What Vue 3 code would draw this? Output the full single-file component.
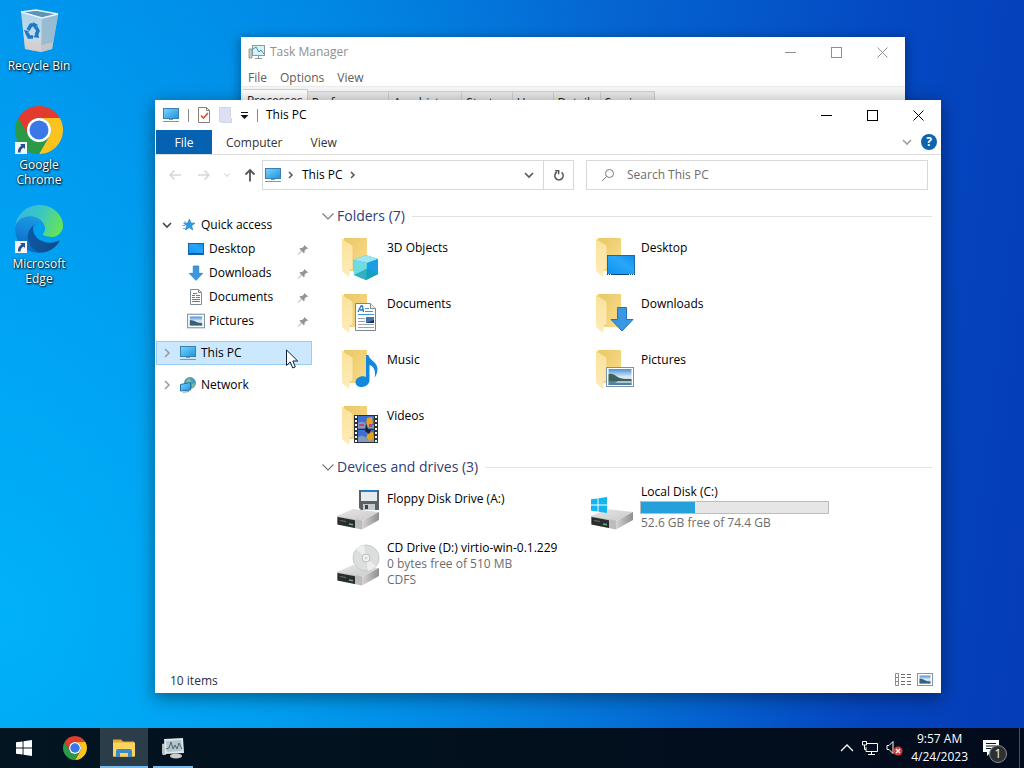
<template>
  <div class="screen">
    <!-- Shared icon shapes -->
    <svg class="icon-sheet" aria-hidden="true">
      <defs>
        <linearGradient id="g-screen" x1="0" y1="0" x2="1" y2="1">
          <stop offset="0" stop-color="#7fd4fb" />
          <stop offset="1" stop-color="#1a95e0" />
        </linearGradient>
        <linearGradient id="g-desk" x1="0" y1="1" x2="1" y2="0">
          <stop offset="0" stop-color="#0d93f0" />
          <stop offset="0.6" stop-color="#2aa6f8" />
          <stop offset="1" stop-color="#0a8eec" />
        </linearGradient>
        <linearGradient id="g-back" x1="0" y1="0" x2="1" y2="1">
          <stop offset="0" stop-color="#e9c767" />
          <stop offset="1" stop-color="#fbdc8a" />
        </linearGradient>
        <linearGradient id="g-leaf" x1="0" y1="0" x2="0" y2="1">
          <stop offset="0" stop-color="#fbe29c" />
          <stop offset="1" stop-color="#fdebb8" />
        </linearGradient>
        <linearGradient id="g-drive" x1="0" y1="0" x2="1" y2="1">
          <stop offset="0" stop-color="#e6e6e6" />
          <stop offset="1" stop-color="#c9c9c9" />
        </linearGradient>
        <linearGradient id="g-side" x1="0" y1="0" x2="1" y2="0">
          <stop offset="0" stop-color="#d4d4d4" />
          <stop offset="1" stop-color="#8f8f8f" />
        </linearGradient>
        <linearGradient id="g-sky" x1="0" y1="0" x2="0" y2="1">
          <stop offset="0" stop-color="#4b8fd8" />
          <stop offset="0.5" stop-color="#dcebf6" />
          <stop offset="1" stop-color="#88a9c4" />
        </linearGradient>
        <linearGradient id="g-edge-a" x1="0" y1="0" x2="1" y2="0">
          <stop offset="0" stop-color="#0c59a4" />
          <stop offset="1" stop-color="#114a8b" />
        </linearGradient>
        <linearGradient id="g-edge-b" x1="0.6" y1="0" x2="0.3" y2="1">
          <stop offset="0" stop-color="#1b9de2" />
          <stop offset="0.5" stop-color="#1383d9" />
          <stop offset="1" stop-color="#0a62b9" />
        </linearGradient>
        <linearGradient id="g-edge-c" x1="0" y1="0.3" x2="1" y2="0.6">
          <stop offset="0" stop-color="#35b5e6" />
          <stop offset="0.5" stop-color="#3cc8c0" />
          <stop offset="1" stop-color="#66e452" />
        </linearGradient>
        <linearGradient id="g-bin" x1="0" y1="0" x2="0" y2="1">
          <stop offset="0" stop-color="#a9d2ea" />
          <stop offset="0.6" stop-color="#c9dde9" />
          <stop offset="1" stop-color="#cfc9c7" />
        </linearGradient>
      </defs>

      <symbol id="i-pc" viewBox="0 0 18 16">
        <rect x="1.5" y="1.5" width="15" height="10" fill="url(#g-screen)" stroke="#3a81b0" />
        <path d="M7 12.500h4M1 14.500h16" stroke="#7d98a8" />
      </symbol>

      <symbol id="i-chrome" viewBox="0 0 48 48">
        <path d="M24 12H44.780A24 24 0 0 0 3.220 12L13.610 30A12 12 0 0 1 24 12z" fill="#e33b2e" />
        <path d="M34.390 30L24 48A24 24 0 0 0 44.780 12H24A12 12 0 0 1 34.390 30z" fill="#fcc31f" />
        <path d="M13.610 30L3.220 12A24 24 0 0 0 24 48L34.390 30A12 12 0 0 1 13.610 30z" fill="#2b9a47" />
        <circle cx="24" cy="24" r="12" fill="#fff" />
        <circle cx="24" cy="24" r="9.500" fill="#3b78e7" />
      </symbol>

      <symbol id="i-edge" viewBox="0 0 256 256">
        <path fill="url(#g-edge-a)" d="M231.070 190.540c-3.380 1.760-6.860 3.330-10.430 4.690a101.870 101.870 0 0 1-35.940 6.460c-47.360 0-88.600-32.580-88.600-74.380a31.520 31.520 0 0 1 16.430-27.310c-42.840 1.800-53.830 46.400-53.830 72.530 0 73.880 68.120 81.370 82.790 81.370 7.910 0 19.850-2.300 27.030-4.570l1.310-.44a128.340 128.340 0 0 0 66.600-52.800 4 4 0 0 0-5.360-5.550z" />
        <path fill="url(#g-edge-b)" d="M105.730 241.420a79.200 79.200 0 0 1-22.740-21.340 80.720 80.720 0 0 1 29.540-120.080c3.130-1.470 8.480-4.140 15.600-4a32.500 32.500 0 0 1 25.770 13c4.100 5.500 6.370 12.100 6.480 18.950 0-.2 24.500-79.640-80.020-79.640-43.900 0-80.010 41.660-80.010 78.220a130.150 130.150 0 0 0 12.110 56 128 128 0 0 0 156.380 67.120 75.550 75.550 0 0 1-62.780-8z" />
        <path fill="url(#g-edge-c)" d="M152.330 148.860c-.81 1.050-3.300 2.500-3.300 5.670 0 2.610 1.700 5.120 4.720 7.230 14.380 10 41.490 8.680 41.560 8.680a59.570 59.570 0 0 0 30.270-8.350 61.380 61.380 0 0 0 30.430-52.880c.26-22.410-8-37.310-11.340-43.910C223.460 23.840 177.720 0 128 0A128 128 0 0 0 0 126.200c.48-36.540 36.800-66.050 80-66.050 3.500 0 23.460.34 42 10.070 16.340 8.580 24.900 18.940 30.850 29.210 6.180 10.670 7.280 24.150 7.280 29.520 0 5.370-2.740 13.330-7.800 19.910z" />
      </symbol>

      <symbol id="i-bin" viewBox="0 0 48 48">
        <path d="M6 5L43 8 37 42 26 45 10 42z" fill="url(#g-bin)" />
        <path d="M27 11L43 8 37 42 26 45z" fill="#8fb4cc" opacity="0.8" />
        <path d="M6 5L21 3 43 7 27 11z" fill="#5f93b3" stroke="#e6f3fa" stroke-width="1.500" />
        <path d="M9.500 35L26 38 38 35 37 42 26 45 10 42z" fill="#d8cfcb" opacity="0.600" />
        <g transform="translate(0 -1)">
          <g fill="none" stroke="#1b79c8" stroke-width="3.500">
            <path d="M13 24l3-5 4 0" />
            <path d="M21 21l2 4-2 4" />
            <path d="M18 31h-4l-2-4" />
          </g>
          <path d="M18 16l5 3-4 4zM23 26l1 6-6-1zM9 24l5 1-3 4z" fill="#1b79c8" />
        </g>
      </symbol>

      <symbol id="i-shortcut" viewBox="0 0 12 12">
        <rect width="12" height="12" fill="#f4f4f4" />
        <path d="M5 2h5v5L8.500 5.500Q5.500 7 5.500 10.500H3Q2.500 6 6.500 3.500z" fill="#234f94" />
      </symbol>

      <symbol id="i-star" viewBox="0 0 18 16">
        <path d="M10.500 2l1.300 4 4.200.2-3.400 2.500 1.200 4.300-3.600-2.400L6.500 13l1.200-4.200L4.600 6.200l4.100-.2z" fill="#2c9ae3" stroke="#2a86c4" stroke-width="0.700" />
        <path d="M4 11.500h3M3 8.500h3M5 5h2" stroke="#6fb4de" />
      </symbol>

      <symbol id="i-desktop" viewBox="0 0 18 16">
        <rect x="1.500" y="2.500" width="15" height="11" fill="url(#g-desk)" stroke="#1466a8" />
        <path d="M2 12.500h14" stroke="#0b5693" />
      </symbol>

      <symbol id="i-down" viewBox="0 0 24 26">
        <path d="M7.500 1.500h9v12h6.500L12 25 1 13.500h6.500z" fill="#3a97e2" stroke="#2273b8" />
      </symbol>

      <symbol id="i-doc" viewBox="0 0 16 16">
        <path d="M2.500.5h8l3 3v12h-11z" fill="#fff" stroke="#7e8c95" />
        <path d="M10.500.5v3h3" fill="none" stroke="#7e8c95" />
        <path d="M4 6.500h3M8 6.500h4M4 8.500h3M8 8.500h4M4 10.500h8M4 12.500h8M5 4.500h4" stroke="#2f8ccd" />
      </symbol>

      <symbol id="i-picture" viewBox="0 0 28 20">
        <rect x="0.500" y="0.500" width="27" height="19" fill="#fff" stroke="#7693aa" />
        <rect x="2.500" y="2" width="23" height="16" fill="url(#g-sky)" />
        <path d="M2.500 7q4-1 7 1.500t9 3.500h7v2h-23z" fill="#3c6259" />
        <path d="M2.500 14h23v4h-23z" fill="#54809f" />
        <path d="M12 14h13.500v2H9z" fill="#a9c5d6" />
      </symbol>

      <symbol id="i-picture-small" viewBox="0 0 16 13">
        <rect x="0.500" y="0.500" width="15" height="12" fill="#fff" stroke="#8597a5" />
        <path d="M2.500 2.500h11v8h-11z" fill="url(#g-sky)" />
        <path d="M2.500 5.500q3 0 5 1.500t6 1.500v2h-11z" fill="#35617c" />
      </symbol>

      <symbol id="i-network" viewBox="0 0 18 16">
        <circle cx="11" cy="6" r="5.500" fill="#4b9bc4" stroke="#2f7093" stroke-width="0.600" />
        <path d="M9 1.500q4 0 3 3t-3 2-2-2zM13 7l3-1-1 3-2 2z" fill="#83bf8d" />
        <path d="M1.500 7.500l10-2v7.500l-10 1z" fill="url(#g-screen)" stroke="#1e74ae" />
        <path d="M4 15.300l6-.8" stroke="#7d98a8" />
      </symbol>

      <symbol id="i-pin" viewBox="0 0 12 12">
        <path d="M7 1l4 4-1.300.5-.7-.1-1.800 1.800.1 2-1 .9L4.100 7.900.5 11.500 0 11l3.700-3.600L1.600 5.200l1-.9 2 .1L6.500 2.500z" fill="#8e979e" />
      </symbol>

      <symbol id="i-folder" viewBox="0 0 48 48">
        <path d="M8 2h22q1 0 1 1v32H12z" fill="url(#g-back)" />
        <path d="M6 3l10 6q1 1 1 3v20l-3 1-1 8-6-5q-1-1-1-3z" fill="url(#g-leaf)" />
        <path d="M6 3l10 6q1 1 1 3v20" fill="none" stroke="#eccb74" stroke-width="0.700" />
      </symbol>

      <symbol id="i-drive" viewBox="0 0 48 48">
        <path d="M1 32L17 25l26 3-17 9z" fill="url(#g-drive)" />
        <path d="M26 37l17-9v8L26 45.500z" fill="url(#g-side)" />
        <path d="M1 32L26 36.500V45.500L1 40.500z" fill="#bdbdbd" />
        <path d="M1.500 33L19 36.200V44L1.500 40.500z" fill="#2a2d2c" />
        <path d="M4 36.500l6 1" stroke="#6c706f" stroke-width="1.200" />
        <path d="M13 40l4 .7" stroke="#6fae7e" stroke-width="1.500" />
      </symbol>

      <symbol id="i-windows" viewBox="0 0 16 16">
        <path d="M0 2.300L6.600 1.400V7.600H0zM7.500 1.250L16 0V7.600H7.500zM0 8.400H6.600V14.600L0 13.700zM7.500 8.400H16V16L7.500 14.800z" fill="currentColor" />
      </symbol>

      <symbol id="i-details" viewBox="0 0 16 13">
        <path d="M.5.5h3v12h-3zM.5 4.500h3M.5 8.500h3" fill="none" stroke="#8b8b8b" />
        <path d="M6 1.500h4M12 1.500h4M6 4.500h4M12 4.500h4M6 8.500h4M12 8.500h4M6 11.500h4M12 11.500h4" stroke="#6b6b6b" />
      </symbol>

      <symbol id="i-chevron" viewBox="0 0 12 12">
        <path d="M2 4l4 4 4-4" fill="none" stroke="currentColor" stroke-width="1.600" />
      </symbol>

      <symbol id="i-chevron-wide" viewBox="0 0 12 12">
        <path d="M.5 3.500l5.500 5.500 5.500-5.500" fill="none" stroke="currentColor" stroke-width="1.100" />
      </symbol>

      <symbol id="i-chevron-right" viewBox="0 0 12 12">
        <path d="M4 2l4 4-4 4" fill="none" stroke="currentColor" stroke-width="1.500" />
      </symbol>

      <symbol id="i-crumb" viewBox="0 0 12 12">
        <path d="M5 3l3 3-3 3" fill="none" stroke="currentColor" stroke-width="1.500" />
      </symbol>

      <symbol id="i-min" viewBox="0 0 11 11"><path d="M0 5.500h11" stroke="currentColor" /></symbol>
      <symbol id="i-max" viewBox="0 0 11 11">
        <rect x="0.500" y="0.500" width="10" height="10" fill="none" stroke="currentColor" />
      </symbol>
      <symbol id="i-close" viewBox="0 0 11 11"><path d="M.5.5l10 10M10.500.5l-10 10" stroke="currentColor" /></symbol>
    </svg>

    <main class="desktop">
      <!-- Desktop shortcuts -->
      <div class="shortcuts">
        <button v-for="item in shortcuts" :key="item.label" class="shortcut">
          <span class="shortcut-art">
            <svg class="shortcut-icon"><use :href="item.icon" /></svg>
            <svg v-if="item.link" class="shortcut-arrow"><use href="#i-shortcut" /></svg>
          </span>
          <span class="shortcut-label">{{ item.label }}</span>
        </button>
      </div>

      <!-- Task Manager -->
      <section class="window task-manager" aria-label="Task Manager">
        <header class="title-bar">
          <svg class="tm-icon" viewBox="0 0 18 16">
            <path d="M1 5h3v9H1z" fill="#c6cfc9" stroke="#7d8a86" stroke-width="0.800" />
            <rect x="4.500" y="1.500" width="12" height="10" fill="#d6f1f8" stroke="#8b9a9c" />
            <path d="M5 5l3-2 3 5 2-2 3 4" fill="none" stroke="#3d94ad" />
            <path d="M10.500 12v2M7 14.500h7" stroke="#8b9a9c" />
          </svg>
          <span class="title">Task Manager</span>
          <div class="controls">
            <button v-for="c in controls" :key="c.name" class="control" :aria-label="c.name">
              <svg><use :href="c.icon" /></svg>
            </button>
          </div>
        </header>
        <nav class="tm-menu">
          <button v-for="m in taskMenus" :key="m">{{ m }}</button>
        </nav>
        <div class="tm-tabs">
          <button v-for="(t, i) in taskTabs" :key="t" class="tm-tab" :class="{ active: i === 0 }">{{ t }}</button>
        </div>
      </section>

      <!-- File Explorer -->
      <section class="window explorer" aria-label="This PC">
        <header class="title-bar">
          <svg class="pc-icon"><use href="#i-pc" /></svg>
          <i class="bar-sep"></i>
          <button class="quick" aria-label="Properties">
            <svg width="14" height="16" viewBox="0 0 14 16">
              <path d="M1.500.5h8l3 3v12h-11z" fill="#fff" stroke="#8a7f78" />
              <path d="M9.500.5v3h3" fill="none" stroke="#8a7f78" />
              <path d="M4 8.500l2.500 2.500L11 6" fill="none" stroke="#d4502f" stroke-width="1.600" />
            </svg>
          </button>
          <button class="quick" aria-label="New folder">
            <svg width="13" height="16" viewBox="0 0 13 16">
              <path d="M.5.5h11v10l1 1v4H2.500V15h-2z" fill="#dde1f3" stroke="#d0d6e8" />
            </svg>
          </button>
          <button class="quick-more" aria-label="Customize Quick Access Toolbar">
            <svg width="9" height="8" viewBox="0 0 9 8">
              <path d="M1 1.500h7" stroke="#111" />
              <path d="M.5 4h8l-4 4z" fill="#111" />
            </svg>
          </button>
          <i class="bar-sep"></i>
          <span class="title">This PC</span>
          <div class="controls">
            <button v-for="c in controls" :key="c.name" class="control" :aria-label="c.name">
              <svg><use :href="c.icon" /></svg>
            </button>
          </div>
        </header>

        <nav class="ribbon">
          <button class="ribbon-tab file">File</button>
          <button class="ribbon-tab">Computer</button>
          <button class="ribbon-tab">View</button>
          <button class="ribbon-toggle" aria-label="Expand the Ribbon">
            <svg><use href="#i-chevron" /></svg>
          </button>
          <button class="help" aria-label="Help">?</button>
        </nav>

        <div class="address-row">
          <div class="history">
            <button class="arrow" aria-label="Back">
              <svg viewBox="0 0 14 12"><path d="M13 6H2M6.500 1.500L2 6l4.500 4.500" /></svg>
            </button>
            <button class="arrow" aria-label="Forward">
              <svg viewBox="0 0 14 12"><path d="M1 6h11M7.500 1.500L12 6l-4.500 4.500" /></svg>
            </button>
            <button class="recent" aria-label="Recent locations">
              <svg><use href="#i-chevron" /></svg>
            </button>
            <button class="arrow up" aria-label="Up">
              <svg viewBox="0 0 12 14"><path d="M6 13.500V2M1.500 6.500L6 2l4.500 4.500" /></svg>
            </button>
          </div>
          <div class="address">
            <svg class="pc-icon"><use href="#i-pc" /></svg>
            <svg class="crumb-sep"><use href="#i-crumb" /></svg>
            <button class="crumb">This PC</button>
            <svg class="crumb-sep"><use href="#i-crumb" /></svg>
            <button class="address-drop" aria-label="Previous locations">
              <svg><use href="#i-chevron" /></svg>
            </button>
            <button class="refresh" aria-label="Refresh">
              <svg viewBox="0 0 12 12">
                <path d="M8.500 3.300A4.200 4.200 0 1 1 4 3" fill="none" stroke="#555" stroke-width="1.500" />
                <path d="M2.200 1.700h3.500v3.500" fill="none" stroke="#555" stroke-width="1.400" />
              </svg>
            </button>
          </div>
          <label class="search">
            <svg viewBox="0 0 14 14">
              <circle cx="8.500" cy="5.500" r="4" fill="none" stroke="#777" />
              <path d="M5.500 8.500L1 13" stroke="#777" />
            </svg>
            <input type="text" placeholder="Search This PC" aria-label="Search This PC" />
          </label>
        </div>

        <div class="body">
          <nav class="tree">
            <button
              v-for="node in tree"
              :key="node.label"
              class="node"
              :class="[node.level, { selected: node.selected }]"
            >
              <svg v-if="node.level === 'root'" class="twisty" :class="{ open: node.open }">
                <use :href="node.open ? '#i-chevron' : '#i-chevron-right'" />
              </svg>
              <svg class="node-icon"><use :href="node.icon" /></svg>
              <span class="node-label">{{ node.label }}</span>
              <svg v-if="node.level === 'child'" class="pin"><use href="#i-pin" /></svg>
            </button>
          </nav>

          <div class="content">
            <h2 class="group">
              <svg><use href="#i-chevron-wide" /></svg>Folders (7)
            </h2>
            <div class="items folders">
              <button v-for="f in folders" :key="f.name" class="item">
                <svg class="item-icon" viewBox="0 0 48 48">
                  <use href="#i-folder" width="48" height="48" />
                  <g v-if="f.kind === 'cube'">
                    <path d="M17 24l13-5 12 4v15l-12 6-12-5z" fill="#28b3cf" />
                    <path d="M17 24l13-5 12 4-11 4z" fill="#9be6f0" />
                    <path d="M31 27l11-4v15l-12 6z" fill="#1a9fe0" />
                    <path d="M17 24l14 3-1 17-12-5z" fill="#6fdbe4" />
                    <path d="M18 39l12-6v11zM30 33l12 5-12 6z" fill="#179fae" opacity="0.700" />
                  </g>
                  <g v-else-if="f.kind === 'doc'" transform="translate(-1 -4)">
                    <path d="M20.500 15.500h15l5 5v22h-20z" fill="#fff" stroke="#7b878f" />
                    <path d="M35.500 15.500v5h5" fill="#eef2f5" stroke="#7b878f" />
                    <path d="M23 24l3-6h1.500l1 6M25 22h3.500" fill="none" stroke="#2673b8" stroke-width="1.300" />
                    <path d="M30 20.500h4M30 23.500h8M23 26.500h16" stroke="#3d97d3" />
                    <path d="M23 30.500h7M23 33.500h7M23 36.500h16M23 39.500h16" stroke="#9aa4ab" />
                    <rect x="31" y="29" width="8" height="6" fill="#4872ac" />
                    <path d="M31 35l8-3v3z" fill="#1f3157" />
                  </g>
                  <path
                    v-else-if="f.kind === 'music'"
                    d="M30 7h2.500c.5 5 9 7 9 14 0 4-1.500 6-3 9 2-8-1.500-12-5-13V32c0 4-3.500 7-8 7-3.500 0-6-2-6-4.800 0-3.400 3.500-5.900 7.500-5.900q2 0 3 .6z"
                    fill="#1488dd"
                  />
                  <g v-else-if="f.kind === 'video'" transform="translate(0 -6)">
                    <path d="M18 17h24v28H18z" fill="#2d3136" />
                    <path d="M22 18h16v12.500H22zM22 32h16v12H22z" fill="#3f6fce" />
                    <path d="M22 25q5-3 8 1t8 1v3.500H22zM22 39q5-3 8 1t8 0v4H22z" fill="#7f9cc0" />
                    <path d="M31 20l5-1 1 6-4 4-3-3zM32 35l5-1 1 6-4 3-4-3z" fill="#e3a222" />
                    <path d="M23 26h5v2h-5zM33 26h3v3h-3z" fill="#c83f7c" />
                    <path d="M30 25l2 6 3 1-2 4-4-3z" fill="#17213a" />
                    <path d="M20 18v27M40 18v27" stroke="#fff" stroke-width="2" stroke-dasharray="2 2" />
                  </g>
                  <g v-else-if="f.kind === 'desktop'">
                    <rect x="17.500" y="19.500" width="27" height="19" fill="url(#g-desk)" stroke="#1769a9" />
                    <path d="M17 38.500h28" stroke="#0b4a80" />
                    <path d="M18 38.500h3M39 38.500h5" stroke="#fff" stroke-dasharray="1 1" />
                  </g>
                  <use v-else-if="f.kind === 'down'" href="#i-down" x="20" y="14" width="24" height="26" />
                  <use v-else href="#i-picture" x="16" y="18" width="28" height="22" />
                </svg>
                <span class="item-text">{{ f.name }}</span>
              </button>
            </div>

            <h2 class="group">
              <svg><use href="#i-chevron-wide" /></svg>Devices and drives (3)
            </h2>
            <div class="items drives">
              <button class="item plain">
                <svg class="item-icon" viewBox="0 0 48 48">
                  <use href="#i-drive" width="48" height="48" />
                  <path d="M23 6h20v20H25l-2-2z" fill="#5a6268" />
                  <path d="M25 6h16v11H25z" fill="#e6ebee" />
                  <path d="M25 6h16v2H25z" fill="#2780c4" />
                  <path d="M27 20h12v6H27z" fill="#c6cbce" />
                  <path d="M29 21h3v4h-3z" fill="#3c4449" />
                </svg>
                <span class="item-text">Floppy Disk Drive (A:)</span>
              </button>

              <button class="item">
                <svg class="item-icon windows-disk" viewBox="0 0 48 48">
                  <use href="#i-drive" width="48" height="48" />
                  <use href="#i-windows" x="1" y="13" width="16" height="16" />
                </svg>
                <span class="item-text">
                  <span>Local Disk (C:)</span>
                  <span class="usage" role="progressbar" :aria-valuenow="usedPercent">
                    <span class="usage-fill" :style="{ width: usedPercent + '%' }"></span>
                  </span>
                  <span class="meta">{{ disk.free }} GB free of {{ disk.total }} GB</span>
                </span>
              </button>

              <button class="item">
                <svg class="item-icon" viewBox="0 0 48 48">
                  <use href="#i-drive" width="48" height="48" />
                  <circle cx="30" cy="18" r="13" fill="#dcdedd" stroke="#c6cac9" />
                  <path d="M30 18L20 9a13 13 0 0 1 8-4zM30 18l10 8a13 13 0 0 1-8 5z" fill="#ebeeed" />
                  <circle cx="30" cy="18" r="4" fill="#f3f3f3" stroke="#b9bcbb" />
                  <circle cx="30" cy="18" r="1.500" fill="#d2d4d3" />
                </svg>
                <span class="item-text">
                  <span>CD Drive (D:) virtio-win-0.1.229</span>
                  <span class="meta">0 bytes free of 510 MB</span>
                  <span class="meta">CDFS</span>
                </span>
              </button>
            </div>
          </div>
        </div>

        <footer class="status">
          <span>10 items</span>
          <div class="views">
            <button aria-label="Details view"><svg class="view-icon"><use href="#i-details" /></svg></button>
            <button aria-label="Large icons view"><svg class="view-icon"><use href="#i-picture-small" /></svg></button>
          </div>
        </footer>
      </section>

      <svg class="cursor" viewBox="0 0 12 20">
        <path d="M.5 1v15.500L4.200 13l2.600 6 2.500-1.100L6.800 12h4.900z" fill="#fff" stroke="#111a33" />
      </svg>
    </main>

    <!-- Taskbar -->
    <footer class="taskbar">
      <button class="task start" aria-label="Start">
        <svg><use href="#i-windows" /></svg>
      </button>
      <button class="task" aria-label="Google Chrome">
        <svg class="task-icon"><use href="#i-chrome" /></svg>
      </button>
      <button class="task running focused" aria-label="File Explorer">
        <svg class="task-icon" viewBox="0 0 24 24">
          <path d="M1 3.500h8l2 2h11v15H1z" fill="#e9a92b" />
          <path d="M1 6.500h22v14H1z" fill="#fbd35e" />
          <path d="M4 21v-6q0-2 2-2h12q2 0 2 2v6h-4v-4H8v4z" fill="#3c8ac4" />
          <path d="M8 17h8v3.500H8z" fill="#fbd35e" />
        </svg>
      </button>
      <button class="task running" aria-label="Task Manager">
        <svg class="task-icon" viewBox="0 0 24 24">
          <path d="M1 8l4-1v12H2q-1 0-1-2z" fill="#b8c1c4" />
          <path d="M3 3l19-1 1 15-19 1z" fill="#dfe6e8" />
          <path d="M5 5l15-1 1 11-15 1z" fill="#b4c5cb" />
          <path d="M5 13l3-1 2-6 2 7 2-4 2 4 2-6 3 6" fill="none" stroke="#4a6773" />
          <ellipse cx="15" cy="20" rx="6" ry="2.500" fill="#c9cfd1" />
        </svg>
      </button>
      <div class="tray">
        <button class="tray-icon" aria-label="Show hidden icons">
          <svg width="14" height="8" viewBox="0 0 14 8"><path d="M1 7l6-6 6 6" fill="none" stroke="#fff" stroke-width="1.300" /></svg>
        </button>
        <button class="tray-icon" aria-label="Network">
          <svg width="16" height="14" viewBox="0 0 16 14">
            <path d="M5 2.500h10.500v8H4V6M9.500 10.500v3M6 13.500h7M.5 .5h4v3.500h-4zM2.500 4v4.500h1.500" fill="none" stroke="#fff" />
          </svg>
        </button>
        <button class="tray-icon" aria-label="Volume muted">
          <svg width="17" height="16" viewBox="0 0 17 16">
            <path d="M1 5.500h2l4-4v12l-4-4H1z" fill="none" stroke="#fff" />
            <circle cx="12" cy="11" r="4.500" fill="#dc3b3b" />
            <path d="M10 9l4 4M14 9l-4 4" stroke="#fff" stroke-width="1.200" />
          </svg>
        </button>
        <button class="clock">
          <span>9:57 AM</span>
          <span>4/24/2023</span>
        </button>
        <button class="notify" aria-label="Notifications">
          <svg width="16" height="16" viewBox="0 0 16 16">
            <path d="M0 0h16v12H8l-4 4v-4H0z" fill="#fff" />
            <path d="M3 3.500h10M3 6h10M3 8.500h7" stroke="#0a1420" />
          </svg>
          <span class="badge">1</span>
        </button>
      </div>
    </footer>
  </div>
</template>

<script setup>
import { computed, ref } from 'vue'

const shortcuts = [
  { label: 'Recycle Bin', icon: '#i-bin' },
  { label: 'Google Chrome', icon: '#i-chrome', link: true },
  { label: 'Microsoft Edge', icon: '#i-edge', link: true }
]

const controls = [
  { name: 'Minimize', icon: '#i-min' },
  { name: 'Maximize', icon: '#i-max' },
  { name: 'Close', icon: '#i-close' }
]

const taskMenus = ['File', 'Options', 'View']
const taskTabs = ['Processes', 'Performance', 'App history', 'Startup', 'Users', 'Details', 'Services']

const tree = [
  { label: 'Quick access', icon: '#i-star', level: 'root', open: true },
  { label: 'Desktop', icon: '#i-desktop', level: 'child' },
  { label: 'Downloads', icon: '#i-down', level: 'child' },
  { label: 'Documents', icon: '#i-doc', level: 'child' },
  { label: 'Pictures', icon: '#i-picture-small', level: 'child' },
  { label: 'This PC', icon: '#i-pc', level: 'root', selected: true },
  { label: 'Network', icon: '#i-network', level: 'root' }
]

const folders = [
  { name: '3D Objects', kind: 'cube' },
  { name: 'Desktop', kind: 'desktop' },
  { name: 'Documents', kind: 'doc' },
  { name: 'Downloads', kind: 'down' },
  { name: 'Music', kind: 'music' },
  { name: 'Pictures', kind: 'picture' },
  { name: 'Videos', kind: 'video' }
]

const disk = ref({ free: 52.6, total: 74.4 })
const usedPercent = computed(() => Math.round((1 - disk.value.free / disk.value.total) * 100))
</script>

<style>
body {
  overflow: hidden;
}
</style>

<style scoped>
.screen {
  display: flex;
  flex-direction: column;
  height: 100vh;
  font-family: "Open Sans", "Noto Sans", sans-serif;
  font-size: 12px;
  line-height: 16px;
  color: #000;
  background:
    radial-gradient(ellipse 85% 110% at 0% 80%, rgba(0, 190, 255, 0.75), rgba(0, 170, 255, 0) 100%),
    linear-gradient(97deg, #008eea 0%, #0080e0 28%, #0564d0 56%, #0449c2 80%, #043cb6 100%);
}

.icon-sheet {
  position: absolute;
  width: 0;
  height: 0;
}

button {
  margin: 0;
  padding: 0;
  border: 0;
  background: none;
  font: inherit;
  color: inherit;
  text-align: left;
}

svg {
  display: block;
  flex: none;
}

.desktop {
  position: relative;
  flex: 1;
  min-height: 0;
}

/* Desktop shortcuts */
.shortcuts {
  display: grid;
  grid-template-columns: 76px;
  grid-auto-rows: 99px;
  padding: 7px 1px;
}

.shortcut {
  display: flex;
  flex-direction: column;
  align-items: center;
  justify-content: flex-start;
  gap: 3px;
  color: #fff;
  line-height: 15px;
  text-align: center;
  text-shadow: 1px 1px 2px #000, 0 0 2px rgba(0, 0, 0, 0.8);
}

.shortcut-art {
  position: relative;
}

.shortcut-icon {
  width: 48px;
  height: 48px;
}

.shortcut-arrow {
  position: absolute;
  left: 0;
  bottom: 0;
  width: 12px;
  height: 12px;
}

/* Windows */
.window {
  position: absolute;
  display: flex;
  flex-direction: column;
  border: 1px solid transparent;
  background: #fff;
  background-clip: padding-box;
  overflow: hidden;
}

.title-bar {
  display: flex;
  align-items: center;
  flex: none;
  height: 30px;
}

.controls {
  display: flex;
  align-self: stretch;
  margin-left: auto;
}

.control {
  display: grid;
  place-items: center;
  width: 46px;
}

.control svg {
  width: 11px;
  height: 11px;
}

/* Task Manager */
.task-manager {
  top: 36px;
  left: 240px;
  right: 118px;
  bottom: 200px;
  color: #5c5c5c;
  box-shadow: 0 2px 10px rgba(0, 0, 0, 0.35);
}

.task-manager .title-bar {
  color: #8f8f8f;
}

.tm-icon {
  width: 18px;
  height: 16px;
  margin: 0 4px 0 7px;
}

.tm-menu {
  display: flex;
  gap: 13px;
  padding: 2px 7px 0;
  height: 17px;
  border-bottom: 1px solid #ececec;
  flex: none;
}

.tm-tabs {
  display: flex;
  align-items: flex-end;
  flex: none;
  height: 26px;
  padding: 0 2px;
  background: #f7f7f7;
  color: #222;
}

.tm-tab {
  height: 22px;
  padding: 2px 4px 0;
  border: 1px solid #d0d0d0;
  border-left: 0;
  background: #e9e9e9;
  line-height: 16px;
}

.tm-tab.active {
  height: 24px;
  padding-top: 0;
  background: #fff;
}

/* File Explorer */
.explorer {
  top: 99px;
  left: 154px;
  right: 82px;
  bottom: 34px;
  box-shadow: 0 4px 16px rgba(0, 0, 0, 0.4);
}

.pc-icon {
  width: 18px;
  height: 16px;
}

.explorer > .title-bar {
  gap: 8px;
  padding-left: 7px;
}

.bar-sep {
  width: 1px;
  height: 13px;
  background: #8a8a8a;
}

.ribbon {
  display: flex;
  align-items: center;
  flex: none;
  height: 24px;
  padding: 0 4px 0 1px;
  border-bottom: 1px solid #dcdcdc;
  color: #333;
}

.ribbon-tab {
  height: 24px;
  padding: 2px 14px 0;
}

.ribbon-tab.file {
  width: 56px;
  padding: 2px 0 0;
  background: #0562b0;
  color: #fff;
  text-align: center;
}

.ribbon-toggle {
  margin-left: auto;
  color: #a0a0a0;
}

.ribbon-toggle svg,
.recent svg,
.address-drop svg,
.crumb-sep,
.refresh svg,
.twisty,
.group svg {
  width: 12px;
  height: 12px;
}

.help {
  width: 16px;
  height: 16px;
  margin-left: 8px;
  border-radius: 50%;
  background: #0e63ad;
  color: #fff;
  font-weight: 700;
  text-align: center;
}

.address-row {
  display: flex;
  align-items: center;
  flex: none;
  gap: 12px;
  height: 40px;
  padding: 0 13px 0 13px;
}

.history {
  display: flex;
  align-items: center;
  gap: 12px;
  margin-right: -7px;
}

.arrow svg {
  width: 14px;
  height: 14px;
  fill: none;
  stroke: #d3d8dc;
  stroke-width: 1.5;
}

.arrow.up svg {
  stroke: #555;
  stroke-width: 1.8;
}

.recent {
  color: #d3d8dc;
}

.recent svg {
  width: 8px;
  height: 8px;
}

.history .arrow:nth-child(2) {
  margin-left: 3px;
}

.address {
  display: flex;
  align-items: center;
  flex: 1 1 312px;
  height: 30px;
  padding-left: 1px;
  border: 1px solid #d9d9d9;
  box-sizing: border-box;
}

.crumb-sep {
  margin: 0 6px 0 2px;
  color: #555;
}

.crumb {
  padding: 0 1px 0 0;
}

.address-drop {
  margin-left: auto;
  padding: 0 8px;
  color: #555;
}

.refresh {
  display: grid;
  place-items: center;
  align-self: stretch;
  width: 30px;
  border-left: 1px solid #d9d9d9;
}

.search {
  display: flex;
  align-items: center;
  flex: 1 1 342px;
  gap: 12px;
  height: 30px;
  padding-left: 14px;
  border: 1px solid #d9d9d9;
  box-sizing: border-box;
}

.search svg {
  width: 14px;
  height: 14px;
}

.search input {
  flex: 1;
  min-width: 0;
  padding: 0;
  border: 0;
  outline: 0;
  background: none;
  font: inherit;
}

.search input::placeholder {
  color: #6d6d6d;
  opacity: 1;
}

.body {
  display: flex;
  flex: 1;
  min-height: 0;
}

/* Navigation tree */
.tree {
  display: flex;
  flex-direction: column;
  width: 158px;
  padding: 18px 1px 0;
  box-sizing: border-box;
  flex: none;
}

.node {
  display: flex;
  align-items: center;
  gap: 4px;
  height: 24px;
  padding: 0 4px;
  border: 1px solid transparent;
  box-sizing: border-box;
}

.node.child {
  padding-left: 30px;
}

.node.child + .node.root,
.node.root + .node.root {
  margin-top: 8px;
}

.node.selected {
  background: #cce8ff;
  border-color: #99cdf2;
}

.twisty {
  margin-right: 2px;
  color: #9a9a9a;
}

.twisty.open {
  color: #444;
}

.node-icon {
  width: 18px;
  height: 16px;
}

.pin {
  width: 11px;
  height: 11px;
  margin-left: auto;
  margin-right: -2px;
}

/* Content pane */
.content {
  flex: 1;
  min-width: 0;
  padding: 11px 9px 0 9px;
}

.group {
  display: flex;
  align-items: center;
  gap: 3px;
  margin: 0;
  font-size: 14px;
  font-weight: 400;
  line-height: 20px;
  color: #2f3d78;
}

.group svg {
  color: #777;
}

.group::after {
  content: "";
  flex: 1;
  height: 1px;
  margin-left: 4px;
  background: #e2e2e2;
}

.items {
  display: grid;
  grid-template-columns: repeat(auto-fill, 254px);
  row-gap: 8px;
  padding-left: 14px;
}

.folders {
  padding-top: 10px;
  padding-bottom: 5px;
}

.drives {
  padding-top: 7px;
}

.item {
  display: flex;
  align-items: flex-start;
  gap: 3px;
  height: 48px;
}

.item-icon {
  width: 48px;
  height: 48px;
}

.item-text {
  display: flex;
  flex-direction: column;
}

.folders .item-text {
  padding-top: 4px;
}

.plain .item-text {
  padding-top: 7px;
}

.meta {
  color: #6d6d6d;
}

.windows-disk {
  color: #12b5ee;
}

.usage {
  width: 187px;
  height: 11px;
  margin: 1px 0 1px -1px;
  border: 1px solid #bcbcbc;
  background: #e6e6e6;
}

.usage-fill {
  display: block;
  height: 100%;
  background: #26a0da;
}

.status {
  display: flex;
  align-items: center;
  justify-content: space-between;
  flex: none;
  height: 24px;
  padding: 0 8px 0 15px;
  color: #26304a;
}

.views {
  display: flex;
  gap: 6px;
  padding-bottom: 3px;
}

.view-icon {
  width: 16px;
  height: 13px;
}

.cursor {
  position: absolute;
  left: 286px;
  top: 349px;
  width: 12px;
  height: 20px;
}

/* Taskbar */
.taskbar {
  display: flex;
  flex: none;
  gap: 1px;
  height: 40px;
  background: linear-gradient(90deg, #021520, #020b1c);
  color: #fff;
}

.task {
  position: relative;
  display: grid;
  place-items: center;
  width: 48px;
}

.start {
  margin-right: 2px;
}

.start svg {
  width: 16px;
  height: 16px;
}

.task-icon {
  width: 24px;
  height: 24px;
}

.running::after {
  content: "";
  position: absolute;
  left: 4px;
  right: 4px;
  bottom: 0;
  height: 2px;
  background: #76b9ed;
}

.focused {
  background: #2b3d49;
}

.focused::after {
  left: 0;
  right: 0;
}

.tray {
  display: flex;
  align-items: center;
  gap: 8px;
  margin-left: auto;
  margin-right: 4px;
  border-right: 1px solid #47525e;
}

.clock {
  display: flex;
  flex-direction: column;
  align-items: center;
  margin-right: 5px;
  line-height: 18px;
}

.notify {
  position: relative;
  padding: 0 20px 0 2px;
}

.badge {
  position: absolute;
  left: 8px;
  top: 5px;
  width: 16px;
  height: 16px;
  border: 1px solid #8b8f94;
  border-radius: 50%;
  background: #2c3138;
  line-height: 16px;
  text-align: center;
}
</style>
